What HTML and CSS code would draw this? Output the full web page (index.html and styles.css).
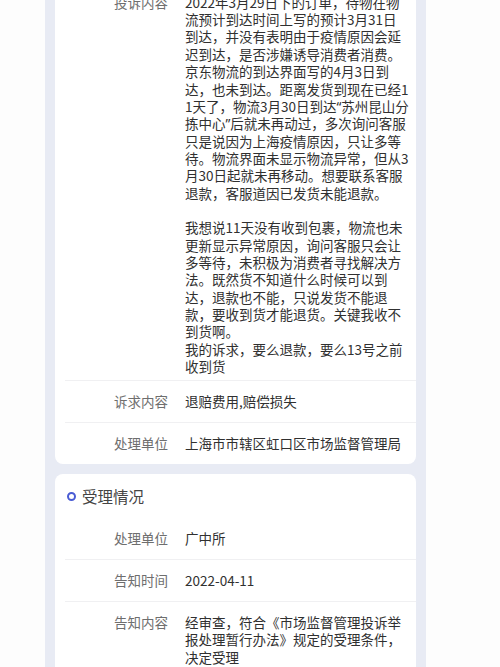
FILE: index.html
```html
<!DOCTYPE html>
<html lang="zh-CN">
<head>
    <meta charset="UTF-8">
    <meta name="viewport" content="width=device-width, initial-scale=1.0">
    <title>投诉详情</title>
    <link rel="stylesheet" href="styles.css">
</head>
<body>
    <div class="page">
        <div class="card">
            <div class="row row-long">
                <div class="label">投诉内容</div>
                <div class="value">2022年3月29日下的订单，待物在物<br>流预计到达时间上写的预计3月31日<br>到达，并没有表明由于疫情原因会延<br>迟到达，是否涉嫌诱导消费者消费。<br>京东物流的到达界面写的4月3日到<br>达，也未到达。距离发货到现在已经1<br>1天了，物流3月30日到达<span class="q">“</span>苏州昆山分<br>拣中心<span class="q">”</span>后就未再动过，多次询问客服<br>只是说因为上海疫情原因，只让多等<br>待。物流界面未显示物流异常，但从3<br>月30日起就未再移动。想要联系客服<br>退款，客服道因已发货未能退款。<br><br>我想说11天没有收到包裹，物流也未<br>更新显示异常原因，询问客服只会让<br>多等待，未积极为消费者寻找解决方<br>法。既然货不知道什么时候可以到<br>达，退款也不能，只说发货不能退<br>款，要收到货才能退货。关键我收不<br>到货啊。<br>我的诉求，要么退款，要么13号之前<br>收到货</div>
            </div>
            <div class="row">
                <div class="label">诉求内容</div>
                <div class="value">退赔费用,赔偿损失</div>
            </div>
            <div class="row">
                <div class="label">处理单位</div>
                <div class="value">上海市市辖区虹口区市场监督管理局</div>
            </div>
        </div>

        <div class="card">
            <div class="card-title"><span class="dot"></span>受理情况</div>
            <div class="row">
                <div class="label">处理单位</div>
                <div class="value">广中所</div>
            </div>
            <div class="row">
                <div class="label">告知时间</div>
                <div class="value">2022-04-11</div>
            </div>
            <div class="row">
                <div class="label">告知内容</div>
                <div class="value">经审查，符合《市场监督管理投诉举<br>报处理暂行办法》规定的受理条件，<br>决定受理</div>
            </div>
        </div>
    </div>
</body>
</html>
```

FILE: styles.css
```css
body {
    margin: 0;
    background: #fdfdfd;
    font-family: "Noto Sans CJK SC", "Noto Sans", sans-serif;
    overflow: hidden;
}
.page {
    width: 361px;
    height: calc(100vh + 18px);
    overflow: hidden;
    margin: -18px 0 0 45px;
    padding: 0 10px;
    background: #e8ebf4;
    display: flex;
    flex-direction: column;
    gap: 10px;
}
.card {
    flex-shrink: 0;
    background: #fff;
    border-radius: 8px;
}
.card-title {
    display: flex;
    align-items: center;
    padding: 12px 0 12px 12px;
    font-size: 15.5px;
    line-height: 20px;
    color: #444;
}
.dot {
    width: 5px;
    height: 5px;
    border: 2.5px solid #4a5cd4;
    border-radius: 50%;
    margin-right: 6px;
}
.row {
    display: flex;
    margin-left: 10px;
    padding: 11.8px 0;
    font-size: 13.5px;
    line-height: 17.35px;
}
.row + .row {
    border-top: 1px solid #f0f0f2;
}
.row-long {
    padding-bottom: 5px;
}
.label {
    width: 103px;
    flex-shrink: 0;
    text-align: right;
    color: #6e6e6e;
}
.value {
    margin-left: 17px;
    color: #303030;
    white-space: nowrap;
}
.q {
    font-family: "Noto Sans", sans-serif;
    line-height: 0;
}
```
